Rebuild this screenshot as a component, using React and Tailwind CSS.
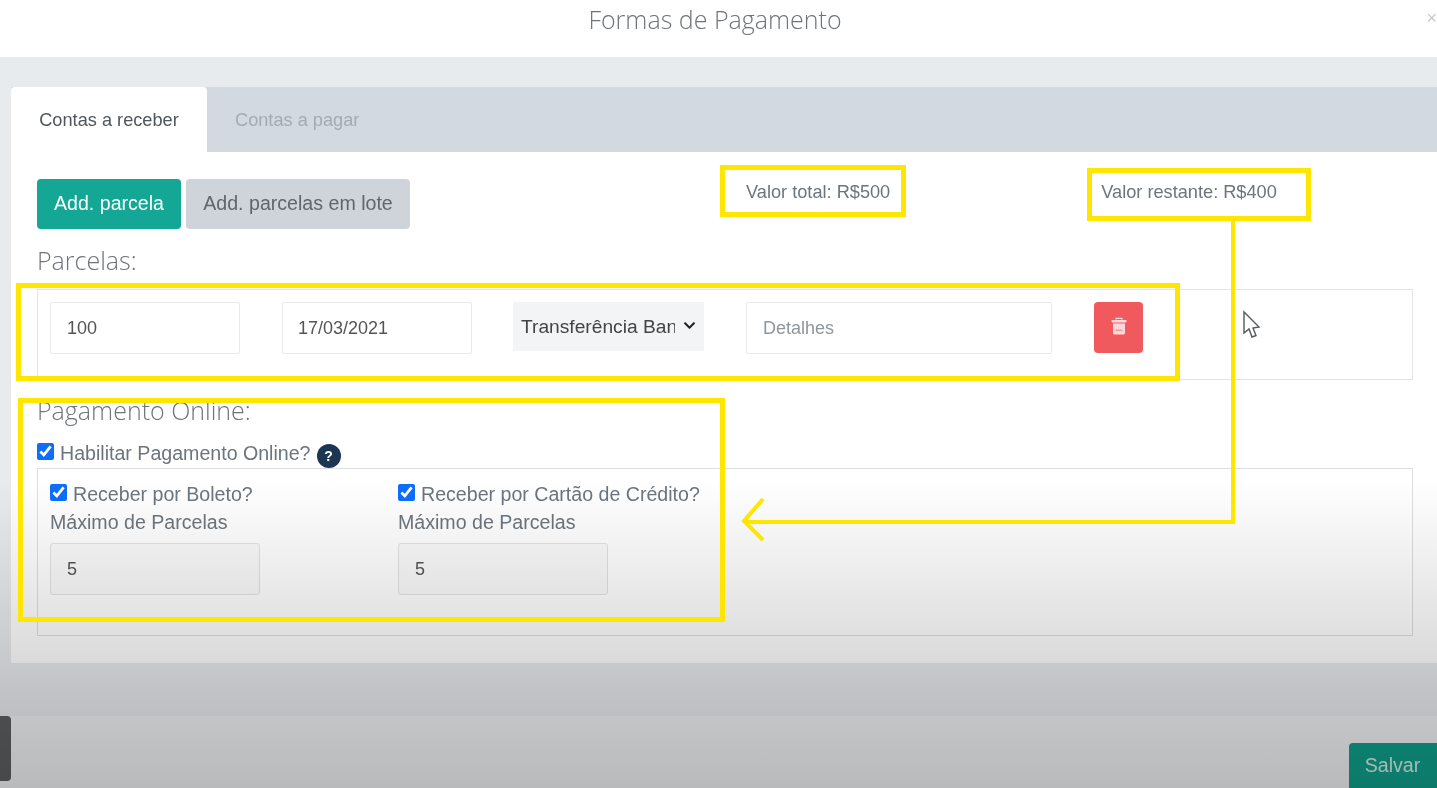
import React from "react"
import { FaChevronDown } from "react-icons/fa"

const sans = "font-['Liberation_Sans',Arial,sans-serif]"
const light = "font-['Open_Sans',sans-serif] font-light"

const Check = ({ label }) => (
  <label className="flex items-center gap-[6px] text-[19.6px] leading-[24px] text-[#6c757d]">
    <input type="checkbox" defaultChecked readOnly className="size-[17px] accent-[#0d6efd] m-0 mb-[3px]" />
    <span>{label}</span>
  </label>
)

const MaxParcelas = ({ label, width }) => (
  <div className={`flex flex-col ${width}`}>
    <Check label={label} />
    <p className="text-[19.6px] leading-[24px] mt-[4px] text-[#6c757d]">Máximo de Parcelas</p>
    <input readOnly value="5" className="mt-[9px] w-[210px] h-[52px] px-[16px] border border-[#e0e2e4] rounded-[3px] bg-[#fafafa] text-[18px] text-[#555]" />
  </div>
)

const App = () => {
  return (
    <div className={`relative w-[1437px] h-[788px] overflow-hidden bg-white blur-[0.4px] ${sans}`}>
      <header className="relative h-[57px] flex justify-center bg-white pr-[7px]">
        <h1 className={`text-[25px] leading-[38px] text-[#6f7478] ${light}`}>Formas de Pagamento</h1>
        <span className="absolute right-0 top-[5px] text-[18px] text-[#c8c8c8]">×</span>
      </header>

      <main className="h-[659px] bg-[#e8ebee] pl-[11px] pt-[30px]">
        <div className="flex h-[65px] bg-[#d2d9e0]">
          <div className="w-[196px] bg-white rounded-t-[4px] flex items-center justify-center pt-[3px] text-[18.2px] text-[#50565c]">Contas a receber</div>
          <div className="pl-[28px] pt-[3px] flex items-center text-[18.2px] text-[#a3abb3]">Contas a pagar</div>
        </div>

        <section className="h-[511px] bg-white pl-[26px] pr-[24px] pt-[27px]">
          <div className="flex h-[50px]">
            <button className="w-[144px] h-[50px] rounded-[4px] bg-[#14a795] text-white text-[19.6px]">Add. parcela</button>
            <button className="ml-[5px] w-[224px] h-[50px] rounded-[4px] bg-[#ced4da] text-[#5f666d] text-[19.6px]">Add. parcelas em lote</button>
            <p className="ml-[336px] mt-[1px] text-[18.2px] leading-[24px] text-[#6c757d]">Valor total: R$500</p>
            <p className="ml-[211px] mt-[1px] text-[18.2px] leading-[24px] text-[#6c757d]">Valor restante: R$400</p>
          </div>

          <h2 className={`mt-[14px] text-[25px] leading-[34px] text-[#6f7478] ${light}`}>Parcelas:</h2>
          <div className="mt-[12px] h-[91px] border border-[#e2e4e6] pl-[12px] pt-[12px] flex items-start">
            <input readOnly value="100" className="w-[190px] h-[52px] px-[16px] border border-[#e8eaec] rounded-[2px] text-[18px] text-[#555]" />
            <input readOnly value="17/03/2021" className="ml-[42px] w-[190px] h-[52px] px-[15px] border border-[#e8eaec] rounded-[2px] text-[18px] text-[#555]" />
            <div className="relative ml-[41px] w-[191px] h-[49px]">
              <select className="appearance-none w-full h-full pl-[8px] pr-[29px] pt-[2px] bg-[#f3f4f5] text-[19.2px] text-[#444]">
                <option>Transferência Bancária</option>
              </select>
              <FaChevronDown className="absolute right-[8px] top-[17px] size-[13px] text-[#222] pointer-events-none" />
            </div>
            <input readOnly placeholder="Detalhes" className="ml-[42px] w-[306px] h-[52px] px-[16px] border border-[#e8eaec] rounded-[2px] text-[18px] placeholder:text-[#8f969c]" />
            <button className="ml-[42px] w-[49px] h-[51px] rounded-[4px] bg-[#f05a5f] flex items-center justify-center">
              <svg className="mb-[3px]" width="18" height="18" viewBox="0 0 18 18">
                <path d="M6.2 2.6V1.4H11.8V2.6" fill="none" stroke="#ffd9d9" strokeWidth="1.4" />
                <rect x="1.5" y="3" width="15" height="2.4" rx="0.8" fill="#ffd9d9" />
                <path d="M3 6.4H15V16C15 16.8 14.4 17.4 13.6 17.4H4.4C3.6 17.4 3 16.8 3 16Z" fill="#ffd9d9" />
                <rect x="5.5" y="12.4" width="7" height="1.8" fill="#f3a0a3" />
              </svg>
            </button>
          </div>

          <h2 className={`mt-[13px] text-[25px] leading-[34px] text-[#6f7478] ${light}`}>Pagamento Online:</h2>
          <div className="mt-[14px] h-[24px] flex items-center">
            <Check label="Habilitar Pagamento Online?" />
            <span className="ml-[6px] mt-[6px] size-[24px] rounded-full bg-[#1c3552] text-white text-[14px] font-bold flex items-center justify-center">?</span>
          </div>
          <div className="mt-[3px] h-[168px] border border-[#dcdee0] pl-[12px] pt-[13px] flex">
            <MaxParcelas label="Receber por Boleto?" width="w-[348px]" />
            <MaxParcelas label="Receber por Cartão de Crédito?" width="w-[320px]" />
          </div>
        </section>
      </main>

      <footer className="h-[72px] bg-[#f0f2f4] flex justify-between items-end">
        <div className="w-[11px] h-[65px] mb-[7px] bg-[#5c5e60] rounded-r-[4px]"></div>
        <button className="w-[88px] h-[45px] pr-[1px] rounded-tl-[4px] bg-[#0f9f8a] text-[#d5ece8] text-[19.6px]">Salvar</button>
      </footer>

      {/* sombra do video por cima da pagina */}
      <div className="absolute left-0 right-0 top-[480px] h-[308px] pointer-events-none bg-[linear-gradient(to_bottom,rgba(0,0,0,0)_0%,rgba(0,0,0,0.19)_77%,rgba(0,0,0,0.23)_100%)]"></div>

      {/* marcacoes amarelas */}
      <div className="absolute left-[720px] top-[165px] w-[186px] h-[52px] border-[5px] border-[#ffe600]"></div>
      <div className="absolute left-[1087px] top-[168px] w-[224px] h-[53px] border-[5px] border-[#ffe600]"></div>
      <div className="absolute left-[16px] top-[283px] w-[1164px] h-[98px] border-[5px] border-[#ffe600]"></div>
      <div className="absolute left-[18px] top-[398px] w-[707px] h-[224px] border-[5px] border-[#ffe600]"></div>
      <svg className="absolute left-[735px] top-[218px]" width="505" height="325" viewBox="0 0 505 325" fill="none" stroke="#ffe600" strokeWidth="4">
        <path d="M498 3V304H12" />
        <path d="M28 281L9 303L28 322" />
      </svg>

      {/* cursor */}
      <svg className="absolute left-[1242px] top-[310px]" width="20" height="30" viewBox="0 0 20 30" fill="#fff" stroke="#55595c" strokeWidth="1.4">
        <path d="M2 2V23L7 19L10 27L14 25.5L11 18L17 17Z" />
      </svg>
    </div>
  )
}
export default App
